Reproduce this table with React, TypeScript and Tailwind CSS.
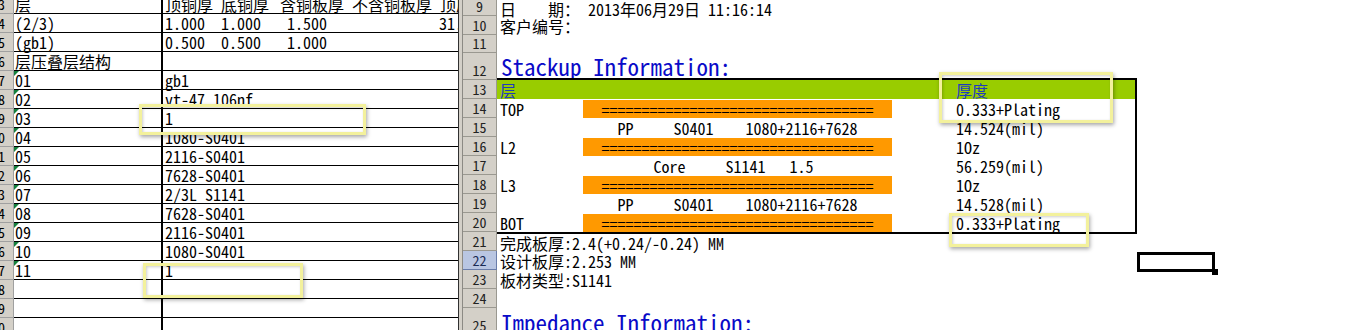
import React from "react";

type LRowData = { n: number; a: string; b: string; tri?: boolean };

const leftRows: LRowData[] = [
  { n: 6, a: "层压叠层结构", b: "" },
  { n: 7, a: "01", b: "gb1", tri: true },
  { n: 8, a: "02", b: "vt-47 106nf", tri: true },
  { n: 9, a: "03", b: "1", tri: true },
  { n: 10, a: "04", b: "1080-S0401", tri: true },
  { n: 11, a: "05", b: "2116-S0401", tri: true },
  { n: 12, a: "06", b: "7628-S0401", tri: true },
  { n: 13, a: "07", b: "2/3L S1141", tri: true },
  { n: 14, a: "08", b: "7628-S0401", tri: true },
  { n: 15, a: "09", b: "2116-S0401", tri: true },
  { n: 16, a: "10", b: "1080-S0401", tri: true },
  { n: 17, a: "11", b: "1", tri: true },
  { n: 18, a: "", b: "" },
  { n: 19, a: "", b: "" },
  { n: 20, a: "", b: "" },
];

function LeftHead({ n }: { n: number }) {
  return (
    <div className="flex w-[14px] shrink-0 items-end justify-end overflow-hidden border-b border-r border-[#a0a0a0] bg-[#d4d0c8] pr-[8px] text-[14px] leading-[17px]">
      {n}
    </div>
  );
}

function LeftSheet() {
  return (
    <div className="flex w-[458px] shrink-0 flex-col">
      {/* row 3, cut at top */}
      <div className="flex h-[14px] shrink-0 overflow-hidden">
        <LeftHead n={3} />
        <div className="flex w-[149px] shrink-0 items-end border-b border-r-2 border-black pl-[1px]">层</div>
        <div className="flex flex-1 items-end border-b border-black whitespace-nowrap">
          <span className="w-[57px] shrink-0 pl-[2px]">顶铜厚</span>
          <span className="w-[58px] shrink-0 pl-[1px]">底铜厚</span>
          <span className="w-[72px] shrink-0 pl-[2px]">含铜板厚</span>
          <span className="w-[88px] shrink-0 pl-[2px]">不含铜板厚</span>
          <span className="flex-1 overflow-hidden pl-[2px]">顶层</span>
        </div>
      </div>
      {[
        { n: 4, a: "(2/3)", v: ["1.000", "1.000", "1.500", "", "31.5"] },
        { n: 5, a: "(gb1)", v: ["0.500", "0.500", "1.000", "", ""] },
      ].map((r) => (
        <div key={r.n} className="flex h-[19px] shrink-0">
          <LeftHead n={r.n} />
          <div className="flex w-[149px] shrink-0 items-center border-b border-r-2 border-black pl-[1px]">{r.a}</div>
          <div className="flex flex-1 items-center overflow-hidden border-b border-black whitespace-nowrap">
            <span className="w-[57px] shrink-0 pl-[2px]">{r.v[0]}</span>
            <span className="w-[58px] shrink-0 pl-[1px]">{r.v[1]}</span>
            <span className="w-[72px] shrink-0 pl-[9px]">{r.v[2]}</span>
            <span className="w-[88px] shrink-0">{r.v[3]}</span>
            <span className="flex-1 overflow-hidden pl-[1px]">{r.v[4]}</span>
          </div>
        </div>
      ))}
      {leftRows.map((r) => (
        <div key={r.n} className="flex h-[19px] shrink-0">
          <LeftHead n={r.n} />
          <div className="relative flex w-[149px] shrink-0 items-center border-b border-r-2 border-black pl-[1px]">
            {r.tri && (
              <span className="absolute left-0 top-0 h-0 w-0 border-r-[5px] border-t-[5px] border-r-transparent border-t-[#15803d]" />
            )}
            {r.a}
          </div>
          <div className="flex flex-1 items-center border-b border-black pl-[2px] whitespace-pre">{r.b}</div>
        </div>
      ))}
    </div>
  );
}

function RightHead({ n, h, sel }: { n: number; h: string; sel?: boolean }) {
  return (
    <div
      className={`${h} flex shrink-0 items-end justify-center border-b border-r pb-[1px] text-[14px] leading-[16px] ${
        sel ? "border-[#6a7daa] bg-[#b9c6e2] text-[#1b2a55]" : "border-[#9a9890] bg-[#d4d0c8] text-[#222]"
      }`}
    >
      {n}
    </div>
  );
}

const bar = "==================================";

function StackRow({ a, orange, mid, thick }: { a?: string; orange?: boolean; mid?: string; thick?: string }) {
  return (
    <div className="flex h-[19px] shrink-0 items-center whitespace-pre">
      <div className="w-[86px] shrink-0 pl-[3px]">{a}</div>
      <div
        className={`flex h-[18px] w-[309px] shrink-0 items-center justify-center ${orange ? "bg-[#ff9900]" : ""}`}
      >
        {orange ? bar : mid}
      </div>
      <div className="w-[64px] shrink-0" />
      <div className="flex-1">{thick}</div>
    </div>
  );
}

function RightSheet() {
  const heads: { n: number; h: string; sel?: boolean }[] = [
    { n: 9, h: "h-[16px]" },
    { n: 10, h: "h-[19px]" },
    { n: 11, h: "h-[18px]" },
    { n: 12, h: "h-[27px]" },
    { n: 13, h: "h-[19px]" },
    { n: 14, h: "h-[19px]" },
    { n: 15, h: "h-[19px]" },
    { n: 16, h: "h-[19px]" },
    { n: 17, h: "h-[19px]" },
    { n: 18, h: "h-[19px]" },
    { n: 19, h: "h-[19px]" },
    { n: 20, h: "h-[19px]" },
    { n: 21, h: "h-[19px]" },
    { n: 22, h: "h-[19px]", sel: true },
    { n: 23, h: "h-[19px]" },
    { n: 24, h: "h-[19px]" },
    { n: 25, h: "h-[27px]" },
  ];
  return (
    <div className="flex flex-1">
      <div className="flex w-[34px] shrink-0 flex-col">
        {heads.map((r) => (
          <RightHead key={r.n} n={r.n} h={r.h} sel={r.sel} />
        ))}
      </div>
      <div className="flex flex-1 flex-col">
        <div className="h-[16px] shrink-0 pl-[3px] whitespace-pre">日    期： 2013年06月29日 11:16:14</div>
        <div className="flex h-[19px] shrink-0 items-center pl-[3px]">客户编号：</div>
        <div className="h-[18px] shrink-0" />
        <div className="flex h-[25px] shrink-0 items-end pl-[4px] text-[23px] leading-[24px] text-[#0a0ac8]">
          Stackup Information:
        </div>
        <div className="w-[640px] shrink-0 border-y-2 border-r-2 border-black">
          <div className="flex h-[19px] items-center bg-[#99cc00] text-[#1e3bbf]">
            <div className="w-[86px] shrink-0 pl-[3px]">层</div>
            <div className="w-[373px] shrink-0" />
            <div className="flex-1">厚度</div>
          </div>
          <StackRow a="TOP" orange thick="0.333+Plating" />
          <StackRow mid="PP     S0401    1080+2116+7628" thick="14.524(mil)" />
          <StackRow a="L2" orange thick="1Oz" />
          <StackRow mid="Core     S1141   1.5 " thick="56.259(mil)" />
          <StackRow a="L3" orange thick="1Oz" />
          <StackRow mid="PP     S0401    1080+2116+7628" thick="14.528(mil)" />
          <StackRow a="BOT" orange thick="0.333+Plating" />
        </div>
        <div className="flex h-[17px] shrink-0 items-center pl-[3px] whitespace-pre">完成板厚:2.4(+0.24/-0.24) MM</div>
        <div className="relative flex h-[19px] shrink-0 items-center pl-[3px] whitespace-pre">
          设计板厚:2.253 MM
          <div className="absolute left-[640px] top-[1px] h-[20px] w-[78px] border-[3px] border-black" />
          <div className="absolute left-[715px] top-[18px] h-[6px] w-[6px] bg-black" />
        </div>
        <div className="flex h-[19px] shrink-0 items-center pl-[3px]">板材类型:S1141</div>
        <div className="h-[19px] shrink-0" />
        <div className="flex h-[27px] shrink-0 items-end pl-[4px] text-[23px] leading-[25px] text-[#0a0ac8]">
          Impedance Information:
        </div>
      </div>
    </div>
  );
}

export default function App() {
  const note =
    "absolute border-[3px] border-[#f3f19c] shadow-[1px_2px_4px_rgba(0,0,0,0.35),inset_1px_1px_3px_rgba(0,0,0,0.2)]";
  return (
    <div className="relative flex h-[330px] w-[1360px] overflow-hidden bg-white font-['Noto_Sans_Mono_CJK_SC','Liberation_Mono','Noto_Sans_CJK_SC',monospace] text-[16px] leading-[18px] text-black">
      <LeftSheet />
      <div className="w-[5px] shrink-0 border-x border-l-[#303030] border-r-[#8c8a84] bg-[#d4d0c8]" />
      <RightSheet />

      <div className={`${note} left-[139px] top-[104px] h-[31px] w-[227px]`} />
      <div className={`${note} left-[143px] top-[263px] h-[35px] w-[160px]`} />
      <div className={`${note} left-[939px] top-[72px] h-[51px] w-[174px]`} />
      <div className={`${note} left-[949px] top-[213px] h-[34px] w-[140px]`} />
    </div>
  );
}
